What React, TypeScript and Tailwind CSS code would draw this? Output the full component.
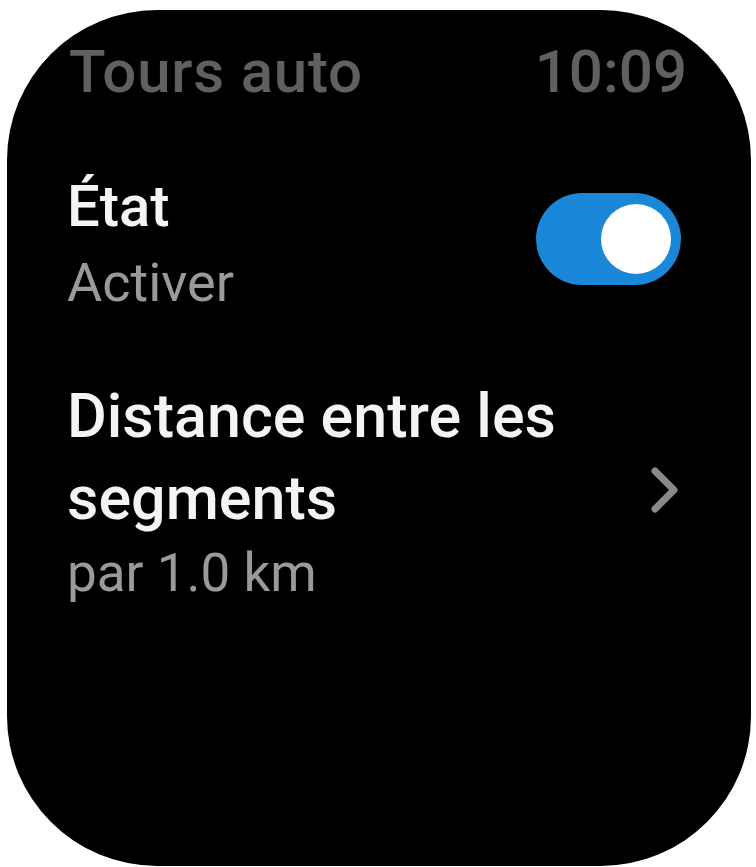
import React from "react";

export default function App() {
  return (
    <div className="w-[756px] h-[867px] bg-white pt-[10px] pl-[7px] overflow-hidden" style={{ fontFamily: "Roboto, 'Noto Sans', sans-serif" }}>
      <div className="w-[744px] h-[856px] bg-black rounded-[150px] pt-[32px] pl-[60px] pr-[64px] flex flex-col">
        <div className="flex justify-between items-start text-[60px] leading-[60px] font-medium text-[#606060]">
          <span className="ml-[2px] tracking-[0.8px]">Tours auto</span>
          <span>10:09</span>
        </div>

        <div className="mt-[72px] flex items-start justify-between pr-[6px]">
          <div className="flex flex-col">
            <span className="text-[58px] leading-[64px] font-medium text-[#f4f4f4]">État</span>
            <span className="mt-[13px] text-[54px] leading-[64px] text-[#9a9a9a]">Activer</span>
          </div>
          <div className="mt-[19px] w-[145px] h-[92px] rounded-full bg-[#1a87d9] flex items-center justify-end pr-[10px]">
            <div className="w-[70px] h-[70px] rounded-full bg-white" />
          </div>
        </div>

        <div className="mt-[60px] flex items-center justify-between pr-[8px]">
          <div className="flex flex-col flex-1">
            <span className="text-[61px] leading-[82px] font-medium text-[#f4f4f4]">Distance entre les segments</span>
            <span className="mt-[2px] text-[53px] leading-[64px] text-[#9a9a9a]">par 1.0 km</span>
          </div>
          <svg width="29" height="48" viewBox="0 0 29 48" className="shrink-0 ml-[20px]">
            <path d="M5 5 L24 24 L5 43" fill="none" stroke="#8a8a8a" strokeWidth="7" strokeLinecap="round" strokeLinejoin="round" />
          </svg>
        </div>
      </div>
    </div>
  );
}
